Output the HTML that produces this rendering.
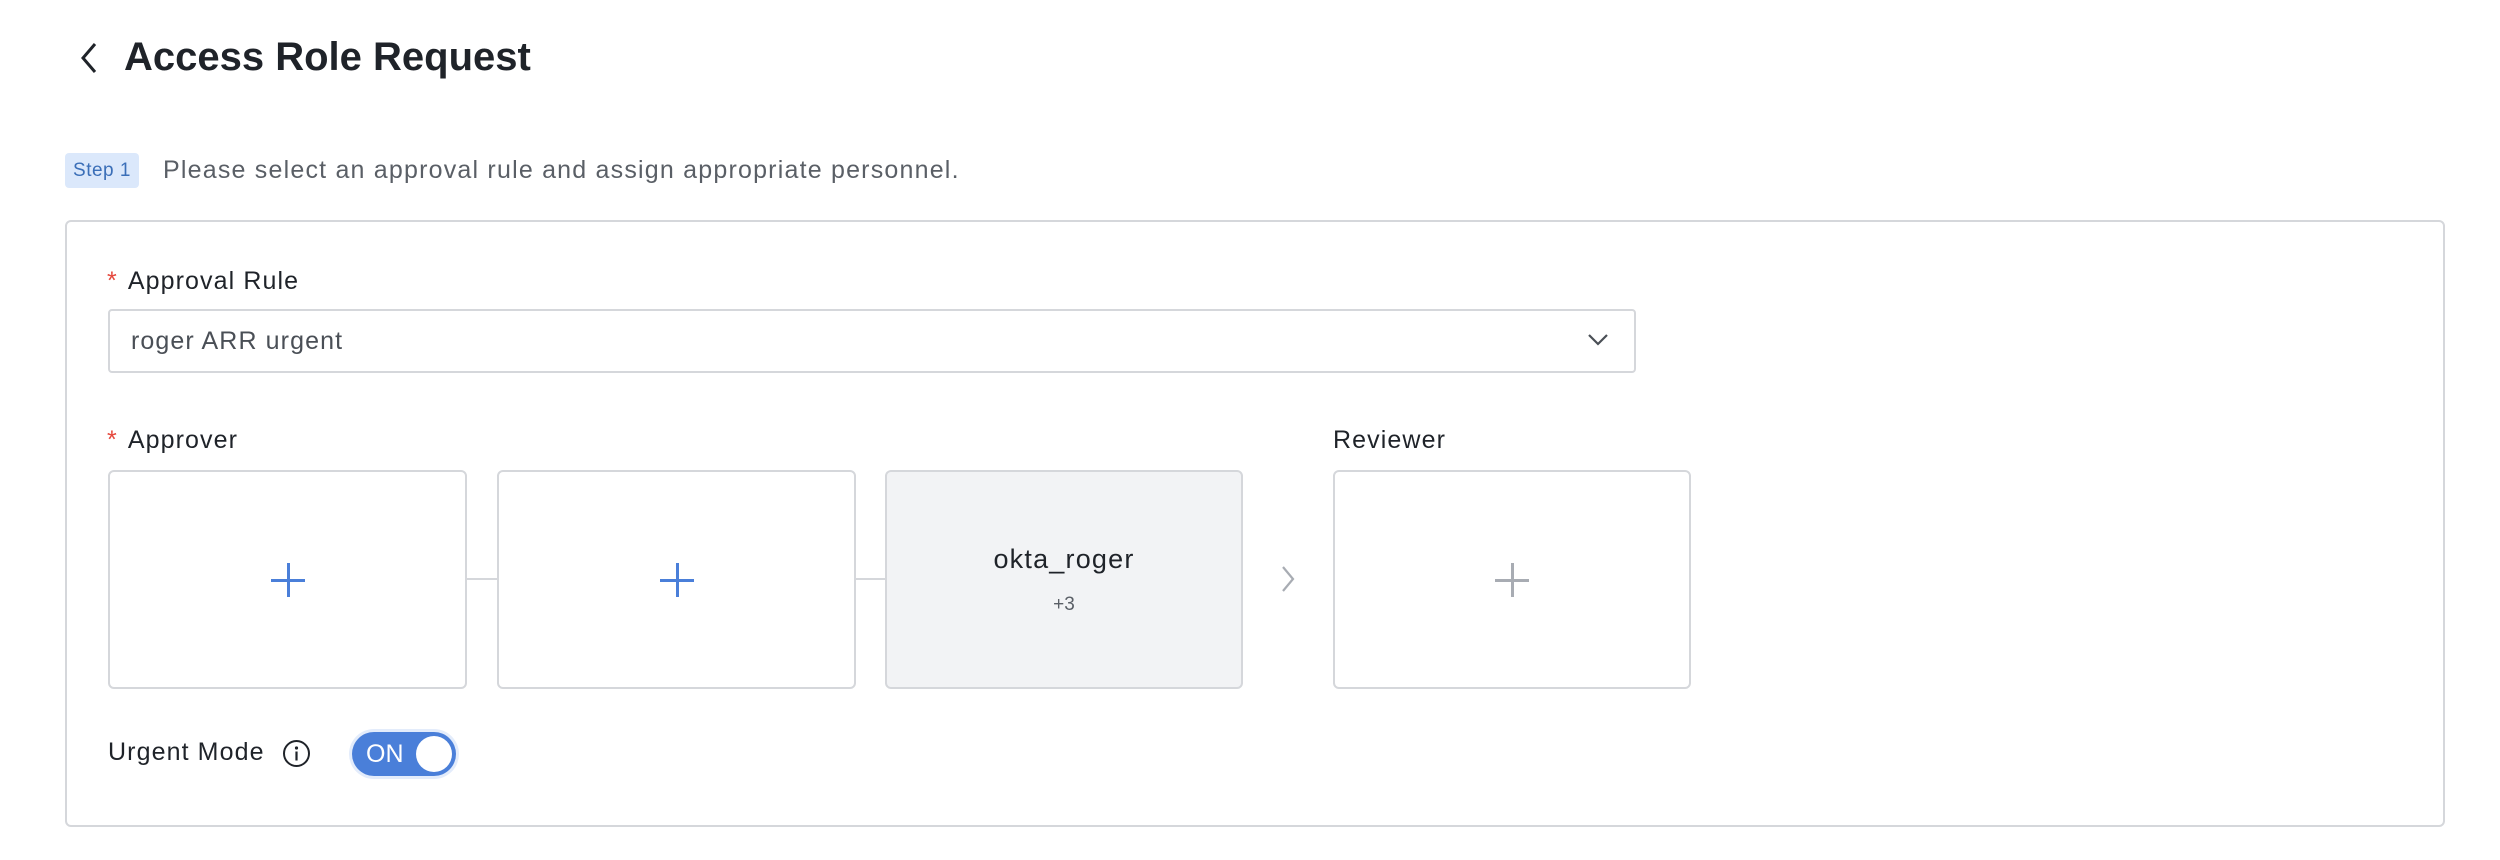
<!DOCTYPE html>
<html><head><meta charset="utf-8"><style>
*{box-sizing:border-box;margin:0;padding:0}
body{width:2500px;height:860px;background:#fff;font-family:"Liberation Sans",sans-serif;position:relative;overflow:hidden;color:#1f2329}
.a{position:absolute}
.box{position:absolute;top:470px;height:219px;border:2px solid #d5d7db;border-radius:6px;background:#fff}
.lbl{font-size:25px;color:#1f2329;letter-spacing:1.1px}
.star{color:#e5483d;margin-right:10px}
.plus{position:absolute;left:50%;top:50%;width:34px;height:34px;margin:-17px 0 0 -17px}
.plus:before,.plus:after{content:"";position:absolute;background:#4a7fd9}
.plus:before{left:16px;top:0;width:3px;height:34px}
.plus:after{top:16px;left:0;height:3px;width:34px}
.g:before,.g:after{background:#a8acb3}
.conn{position:absolute;top:578px;height:2px;background:#d5d7db}
</style></head><body>
<svg class="a" style="left:78px;top:42px" width="22" height="32" viewBox="0 0 22 32"><path d="M17 2 L5 16 L17 30" fill="none" stroke="#1f2329" stroke-width="3"/></svg>
<div class="a" style="left:124px;top:32px;font-size:40px;font-weight:bold;color:#1f2329;line-height:50px">Access Role Request</div>
<div class="a" style="left:65px;top:153px;width:74px;height:35px;background:#dbe8fb;border-radius:4px;color:#3b6fb8;font-size:19px;line-height:35px;text-align:center;letter-spacing:0.5px">Step 1</div>
<div class="a" style="left:163px;top:152px;font-size:25px;color:#5a5f66;line-height:36px;letter-spacing:1.2px">Please select an approval rule and assign appropriate personnel.</div>
<div class="a" style="left:65px;top:220px;width:2380px;height:607px;border:2px solid #d5d7db;border-radius:6px"></div>
<div class="a lbl" style="left:107px;top:265px;line-height:32px"><span class="star">*</span>Approval Rule</div>
<div class="a" style="left:108px;top:309px;width:1528px;height:64px;border:2px solid #d5d7db;border-radius:4px"></div>
<div class="a" style="left:131px;top:325px;font-size:25px;color:#4a4f56;line-height:32px;letter-spacing:1.1px">roger ARR urgent</div>
<svg class="a" style="left:1587px;top:333px" width="22" height="14" viewBox="0 0 22 14"><path d="M2 2 L11 11 L20 2" fill="none" stroke="#4a4f56" stroke-width="2.2"/></svg>
<div class="a lbl" style="left:107px;top:424px;line-height:32px"><span class="star">*</span>Approver</div>
<div class="a lbl" style="left:1333px;top:424px;line-height:32px">Reviewer</div>
<div class="conn" style="left:467px;width:30px"></div>
<div class="conn" style="left:856px;width:29px"></div>
<div class="box" style="left:108px;width:359px"><div class="plus"></div></div>
<div class="box" style="left:497px;width:359px"><div class="plus"></div></div>
<div class="box" style="left:885px;width:358px;background:#f2f3f5">
<div class="a" style="left:0;right:0;top:72px;text-align:center;font-size:27px;color:#1f2329;letter-spacing:1.2px">okta_roger</div>
<div class="a" style="left:0;right:0;top:122px;text-align:center;font-size:19px;color:#5a5f66">+3</div></div>
<svg class="a" style="left:1280px;top:565px" width="16" height="28" viewBox="0 0 16 28"><path d="M3 2 L13 14 L3 26" fill="none" stroke="#a8acb3" stroke-width="2.2"/></svg>
<div class="box" style="left:1333px;width:358px"><div class="plus g"></div></div>
<div class="a lbl" style="left:108px;top:736px;line-height:32px">Urgent Mode</div>
<svg class="a" style="left:282px;top:739px" width="29" height="29" viewBox="0 0 29 29"><circle cx="14.5" cy="14.5" r="12.5" fill="none" stroke="#1f2329" stroke-width="2"/><circle cx="14.5" cy="9" r="1.6" fill="#1f2329"/><rect x="13.4" y="12.5" width="2.2" height="9" fill="#1f2329"/></svg>
<div class="a" style="left:352px;top:732px;width:104px;height:44px;border-radius:22px;background:#4a7fd9;box-shadow:0 0 0 3px #e3ecfb">
<div class="a" style="left:14px;top:6px;color:#fff;font-size:25px;line-height:32px">ON</div>
<div class="a" style="right:4px;top:4px;width:36px;height:36px;border-radius:50%;background:#fff"></div></div>
</body></html>
